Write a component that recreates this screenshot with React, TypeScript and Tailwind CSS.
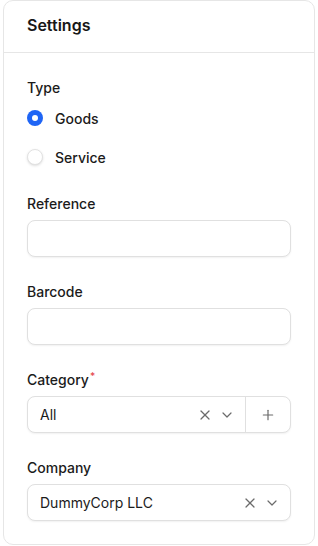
import { X, ChevronDown, Plus } from "lucide-react";

const font = { fontFamily: "Inter, 'Noto Sans', sans-serif" };

type RadioProps = { label: string; checked: boolean };

const Radio: React.FC<RadioProps> = ({ label, checked }) => (
    <label className="flex h-5 items-center gap-[12px]">
        {checked ? (
            <span className="flex h-4 w-4 items-center justify-center rounded-full bg-[#1f65f5]">
                <span className="h-[6px] w-[6px] rounded-full bg-white" />
            </span>
        ) : (
            <span className="h-4 w-4 rounded-full border border-[#e2e2e2] bg-white shadow-sm" />
        )}
        <span className="text-[14px] font-medium text-[#1b1b1b]">{label}</span>
    </label>
);

const Field: React.FC<{ label: string; required?: boolean; children: React.ReactNode }> = ({
    label,
    required,
    children,
}) => (
    <div className="flex flex-col gap-[6px]">
        <p className="h-5 text-[14px] leading-5 font-medium text-[#1b1b1b]">
            {label}
            {required && <sup className="ml-[1px] text-[10px] text-[#e5484d]">*</sup>}
        </p>
        {children}
    </div>
);

const box = "h-[37px] w-full rounded-[8px] border border-[#e0e0e0] bg-white shadow-[0_1px_2px_rgba(0,0,0,0.06)]";

const App: React.FC = () => {
    return (
        <div className="min-h-[546px] bg-white" style={font}>
            <div className="ml-[3px] h-[545px] w-[312px] rounded-[10px] border border-[#e6e6e6] bg-white">
                <div className="flex h-[51px] items-center px-[23px] pb-[4px]">
                    <h1 className="text-[16px] font-semibold text-[#171717]">Settings</h1>
                </div>
                <div className="border-t border-[#e6e6e6]" />
                <div className="flex flex-col px-[23px] pt-[25px]">
                    <p className="h-5 text-[14px] leading-5 font-medium text-[#1b1b1b]">Type</p>
                    <div className="mt-[10px] flex flex-col gap-[19px]">
                        <Radio label="Goods" checked />
                        <Radio label="Service" checked={false} />
                    </div>
                    <div className="mt-[27px] flex flex-col gap-[25px]">
                        <Field label="Reference">
                            <div className={box} />
                        </Field>
                        <Field label="Barcode">
                            <div className={box} />
                        </Field>
                        <Field label="Category" required>
                            <div className={`${box} flex items-center`}>
                                <span className="flex-1 pl-[12px] text-[14px] text-[#1b1b1b]">All</span>
                                <X className="h-4 w-4 text-[#6b6b6b]" strokeWidth={1.8} />
                                <ChevronDown className="ml-[6px] mr-[10px] h-4 w-4 text-[#6b6b6b]" strokeWidth={1.8} />
                                <div className="flex h-full w-[45px] items-center justify-center border-l border-[#e0e0e0]">
                                    <Plus className="h-4 w-4 text-[#6b6b6b]" strokeWidth={1.8} />
                                </div>
                            </div>
                        </Field>
                        <Field label="Company">
                            <div className={`${box} flex items-center`}>
                                <span className="flex-1 pl-[12px] text-[14px] text-[#1b1b1b]">DummyCorp LLC</span>
                                <X className="h-4 w-4 text-[#6b6b6b]" strokeWidth={1.8} />
                                <ChevronDown className="ml-[6px] mr-[10px] h-4 w-4 text-[#6b6b6b]" strokeWidth={1.8} />
                            </div>
                        </Field>
                    </div>
                </div>
            </div>
        </div>
    );
};

export default App;
